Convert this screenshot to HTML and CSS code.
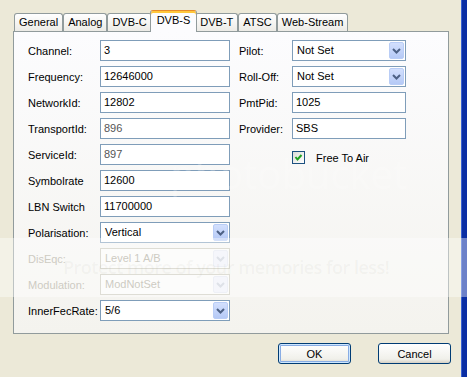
FILE: index.html
```html
<!DOCTYPE html>
<html lang="en">
<head>
    <meta charset="UTF-8">
    <title>Channel Properties - DVB-S</title>
    <link rel="stylesheet" href="styles.css">
</head>
<body>

<div class="window">
    <div class="dialog">
        <div class="tabs">
            <div class="tab">General</div>
            <div class="tab">Analog</div>
            <div class="tab">DVB-C</div>
            <div class="tab active">DVB-S</div>
            <div class="tab">DVB-T</div>
            <div class="tab">ATSC</div>
            <div class="tab">Web-Stream</div>
        </div>

        <div class="panel">
            <div class="col col-left">
                <label>Channel:</label>
                <div class="field">3</div>
                <label>Frequency:</label>
                <div class="field">12646000</div>
                <label>NetworkId:</label>
                <div class="field">12802</div>
                <label>TransportId:</label>
                <div class="field dim">896</div>
                <label>ServiceId:</label>
                <div class="field dim">897</div>
                <label>Symbolrate</label>
                <div class="field">12600</div>
                <label>LBN Switch</label>
                <div class="field">11700000</div>
                <label>Polarisation:</label>
                <div class="combo"><span>Vertical</span><i class="arrow"><svg width="9" height="6" viewBox="0 0 9 6"><path d="M1 1 L4.5 4.5 L8 1" /></svg></i></div>
                <label class="off">DisEqc:</label>
                <div class="combo disabled"><span>Level 1 A/B</span><i class="arrow"><svg width="9" height="6" viewBox="0 0 9 6"><path d="M1 1 L4.5 4.5 L8 1" /></svg></i></div>
                <label class="off">Modulation:</label>
                <div class="combo disabled"><span>ModNotSet</span><i class="arrow"><svg width="9" height="6" viewBox="0 0 9 6"><path d="M1 1 L4.5 4.5 L8 1" /></svg></i></div>
                <label>InnerFecRate:</label>
                <div class="combo"><span>5/6</span><i class="arrow"><svg width="9" height="6" viewBox="0 0 9 6"><path d="M1 1 L4.5 4.5 L8 1" /></svg></i></div>
            </div>

            <div class="col col-right">
                <label>Pilot:</label>
                <div class="combo"><span>Not Set</span><i class="arrow"><svg width="9" height="6" viewBox="0 0 9 6"><path d="M1 1 L4.5 4.5 L8 1" /></svg></i></div>
                <label>Roll-Off:</label>
                <div class="combo"><span>Not Set</span><i class="arrow"><svg width="9" height="6" viewBox="0 0 9 6"><path d="M1 1 L4.5 4.5 L8 1" /></svg></i></div>
                <label>PmtPid:</label>
                <div class="field">1025</div>
                <label>Provider:</label>
                <div class="field">SBS</div>
                <span></span>
                <div class="checkrow">
                    <span class="check"><svg width="11" height="11" viewBox="0 0 11 11"><path d="M2.5 5 L4.5 7.5 L8.5 3" /></svg></span>
                    <span>Free To Air</span>
                </div>
            </div>
        </div>

        <div class="buttons">
            <button class="btn default">OK</button>
            <button class="btn">Cancel</button>
        </div>
    </div>
    <div class="frame"></div>

    <div class="logo-mark">photobucket</div>
    <div class="band">Protect more of your memories for less!</div>
</div>

</body>
</html>
```

FILE: styles.css
```css
body {
    margin: 0;
    font-family: "Liberation Sans", Arial, sans-serif;
    font-size: 11px;
    color: #000;
    background-color: #ECE9D8;
}
.window {
    position: relative;
    display: flex;
    height: 377px;
    overflow: hidden;
}
.dialog {
    flex: 1;
    padding: 10px 10px 0 13px;
}
.frame {
    width: 5px;
    border-left: 1px solid #3A62D0;
    background-color: #0A2EA3;
}

/* tab strip */
.tabs {
    display: flex;
    align-items: flex-end;
    height: 21px;
    margin-left: 1px;
}
.tab {
    height: 17px;
    padding: 0 4px;
    line-height: 17px;
    border: 1px solid #919B9C;
    border-bottom: none;
    border-radius: 3px 3px 0 0;
    background: linear-gradient(#FFFFFF, #ECEBE6);
    white-space: nowrap;
}
.tab.active {
    position: relative;
    z-index: 1;
    height: 19px;
    margin: 0 -2px -1px;
    padding: 2px 6px 0;
    line-height: 15px;
    border-top-color: #E68B2C;
    background: #FCFCFE;
    box-shadow: inset 0 2px 0 #FFC83C;
}

/* page */
.panel {
    display: flex;
    gap: 9px;
    box-sizing: border-box;
    height: 303px;
    margin-right: 2px;
    padding: 8px 0 0 14px;
    border: 1px solid #919B9C;
    background: linear-gradient(#FCFCFE, #F4F3EE);
}
.col {
    display: grid;
    grid-auto-rows: 21px;
    row-gap: 5px;
    align-items: center;
    align-content: start;
}
.col-left {
    grid-template-columns: 72px 130px;
}
.col-right {
    grid-template-columns: 53px 114px;
}
label.off {
    color: #ACA899;
}
.field {
    box-sizing: border-box;
    height: 21px;
    padding: 0 3px;
    line-height: 19px;
    border: 1px solid #7F9DB9;
    background-color: #fff;
}
.field.dim {
    color: #555;
}
.combo {
    display: flex;
    box-sizing: border-box;
    height: 21px;
    padding-left: 4px;
    line-height: 19px;
    border: 1px solid #7F9DB9;
    background-color: #fff;
}
.combo span {
    flex: 1;
}
.arrow {
    display: flex;
    align-items: center;
    justify-content: center;
    box-sizing: border-box;
    width: 15px;
    margin: 1px;
    border: 1px solid #B9CDF6;
    border-radius: 2px;
    background: linear-gradient(#D3E0FD, #B5C9F6);
}
.arrow path {
    fill: none;
    stroke: #4D6185;
    stroke-width: 2;
}
.combo.disabled {
    border-color: #C9C7BA;
    color: #ACA899;
    background-color: #FBFBF9;
}
.combo.disabled .arrow {
    border-color: #E3E7F0;
    background: #EEF1F8;
}
.combo.disabled .arrow path {
    stroke: #C9CED9;
}
.checkrow {
    display: flex;
    align-items: center;
    gap: 11px;
    margin-top: 6px;
}
.check {
    display: flex;
    align-items: center;
    justify-content: center;
    box-sizing: border-box;
    width: 13px;
    height: 13px;
    border: 1px solid #1C5180;
    background: linear-gradient(135deg, #DCDCD7, #FFFFFF);
}
.check path {
    fill: none;
    stroke: #21A121;
    stroke-width: 2;
}

/* dialog buttons */
.buttons {
    display: flex;
    justify-content: flex-end;
    gap: 27px;
    margin-top: 9px;
}
.btn {
    width: 73px;
    height: 21px;
    padding: 0;
    font: inherit;
    color: #000;
    border: 1px solid #003C74;
    border-radius: 3px;
    background: linear-gradient(#FFFFFF, #F0F0EA 80%, #D6D0C5);
}
.btn.default {
    box-shadow: inset 0 0 0 1px #CEE7FF, inset 0 0 0 2px #89ADE4;
}

/* photo host watermark over the screenshot */
.logo-mark {
    position: absolute;
    top: 146px;
    left: 170px;
    font-family: "Open Sans", sans-serif;
    font-size: 40px;
    white-space: nowrap;
    color: rgba(255, 255, 255, 0.22);
}
.band {
    position: absolute;
    top: 238px;
    left: 0;
    right: 0;
    height: 59px;
    line-height: 59px;
    padding-left: 63px;
    font-family: "Open Sans", sans-serif;
    font-weight: 600;
    font-size: 18px;
    letter-spacing: -0.5px;
    white-space: nowrap;
    color: rgba(150, 145, 130, 0.07);
    background-color: rgba(255, 255, 255, 0.4);
}
```
